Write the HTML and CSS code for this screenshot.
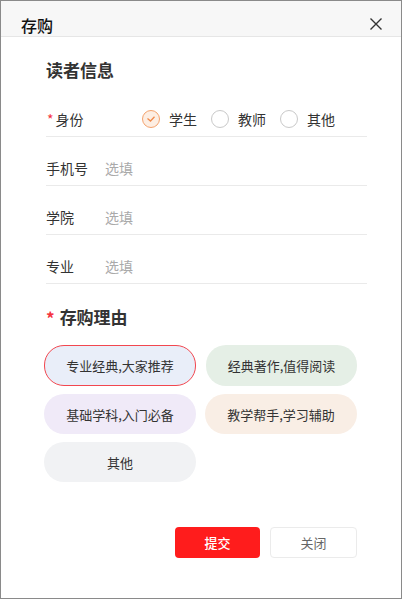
FILE: index.html
```html
<!DOCTYPE html>
<html lang="zh">
<head>
<meta charset="utf-8">
<link rel="stylesheet" href="styles.css">
</head>
<body>
<div class="dialog">
  <div class="header">
    <span class="title">存购</span>
    <svg class="close" width="14" height="14" viewBox="0 0 14 14"><path d="M1.5 1.5 L12.5 12.5 M12.5 1.5 L1.5 12.5" stroke="#333" stroke-width="1.4" fill="none"/></svg>
  </div>
  <div class="body">
    <div class="section-title sec1">读者信息</div>
    <div class="row">
      <div class="label"><span class="req">*</span>身份</div>
      <div class="radios">
        <div class="opt"><span class="radio checked"><svg width="10" height="8" viewBox="0 0 10 8"><path d="M1.5 3.5 L4.5 6 L8.5 1.8" stroke="#f08a4b" stroke-width="1.3" fill="none"/></svg></span>学生</div>
        <div class="opt"><span class="radio"></span>教师</div>
        <div class="opt"><span class="radio"></span>其他</div>
      </div>
    </div>
    <div class="row"><div class="label">手机号</div><div class="ph">选填</div></div>
    <div class="row"><div class="label">学院</div><div class="ph">选填</div></div>
    <div class="row"><div class="label">专业</div><div class="ph">选填</div></div>
    <div class="section-title sec2"><span class="req big">*</span>存购理由</div>
    <div class="chips">
      <div class="chip c1 active">专业经典,大家推荐</div>
      <div class="chip c2">经典著作,值得阅读</div>
      <div class="chip c3">基础学科,入门必备</div>
      <div class="chip c4">教学帮手,学习辅助</div>
      <div class="chip c5">其他</div>
    </div>
    <div class="actions">
      <div class="btn submit">提交</div>
      <div class="btn cancel">关闭</div>
    </div>
  </div>
</div>
</body>
</html>
```
FILE: styles.css
```css
* { box-sizing: border-box; }
html, body { margin: 0; padding: 0; background: #fff; }
body { font-family: "Noto Sans CJK SC", "Noto Sans", sans-serif; color: #333; }
.dialog {
  width: 402px;
  height: 599px;
  border: 1px solid #8a8a8a;
  background: #fff;
  overflow: hidden;
}
.header {
  height: 36px;
  background: #f7f7f7;
  border-bottom: 1px solid #e6e6e6;
  padding: 13px 18px 0 20px;
  display: flex;
  justify-content: space-between;
  align-items: flex-start;
}
.title { font-size: 16px; line-height: 22px; color: #111; font-weight: 500; }
.close { margin-top: 3px; }
.body { padding: 0 34px 0 45px; }
.section-title {
  font-size: 17px;
  font-weight: 700;
  line-height: 24px;
  color: #333;
  display: flex;
  align-items: center;
}
.sec1 { margin-top: 21px; margin-bottom: 6px; }
.sec2 { margin-top: 19px; }
.req { color: #f5333f; font-size: 14px; margin-right: 2px; font-weight: 400; }
.req.big { font-size: 17px; font-weight: 700; margin-right: 5px; margin-top: 3px; }
.row {
  display: flex;
  align-items: center;
  padding: 21px 0 7px;
  border-bottom: 1px solid #eaeaea;
  font-size: 14px;
  line-height: 20px;
}
.label { width: 59px; color: #333; flex-shrink: 0; display: flex; align-items: center; }
.label .req { margin-left: 1px; margin-right: 2px; }
.ph { color: #aaa; }
.radios { display: flex; align-items: center; margin-left: 37px; gap: 14px; }
.opt { display: flex; align-items: center; gap: 9px; color: #333; }
.radio {
  width: 18px; height: 18px;
  border: 1px solid #c9c9c9;
  border-radius: 50%;
  display: flex; align-items: center; justify-content: center;
  background: #fff;
}
.radio.checked { border-color: #f4a36e; background: #fdeee3; }
.chips {
  display: grid;
  grid-template-columns: 152px 152px;
  column-gap: 9px;
  row-gap: 8px;
  margin-left: -2px;
  margin-top: 15px;
}
.chip {
  height: 40px;
  border-radius: 20px;
  display: flex; align-items: center; justify-content: center;
  font-size: 13px;
  color: #333;
  border: 1px solid transparent;
}
.chips .c1 { height: 41px; }
.chips .c2 { height: 41px; margin-left: 1px; }
.c1 { background: #e9eef9; }
.c1.active { border-color: #f2474f; }
.c2 { background: #e5efe6; }
.c3 { background: #f0eaf8; }
.c4 { background: #f9eee5; }
.c5 { background: #f1f2f4; }
.actions {
  display: flex;
  justify-content: flex-end;
  gap: 10px;
  margin-top: 45px;
  padding-right: 10px;
}
.btn {
  height: 31px;
  border-radius: 4px;
  display: flex; align-items: center; justify-content: center;
  font-size: 13px;
}
.submit { width: 85px; background: #ff1c1c; color: #fff; font-weight: 500; }
.cancel { width: 87px; background: #fff; border: 1px solid #ebebeb; color: #666; }
```
